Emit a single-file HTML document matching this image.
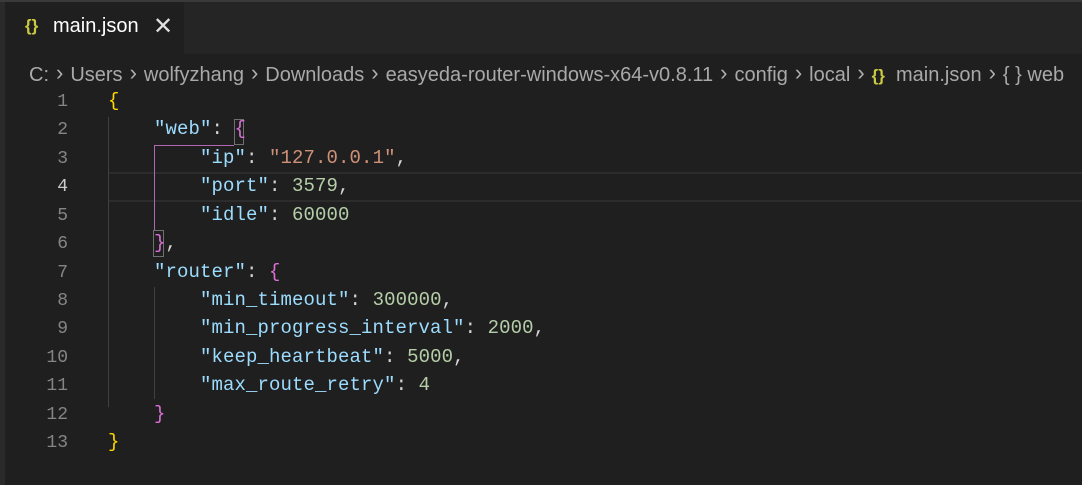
<!DOCTYPE html><html><head><style>
body{margin:0;width:1082px;height:485px;background:#1f1f1f;overflow:hidden;position:relative;font-family:"Liberation Sans",sans-serif}
.top{position:absolute;left:0;top:0;width:1082px;height:2px;background:#3a3a3a}
.tabbar{position:absolute;left:0;top:2px;width:1082px;height:52px;background:#252525}
.tab{position:absolute;left:5px;top:2px;width:179px;height:52px;background:#1f1f1f}
.ls{position:absolute;left:0;top:2px;width:5px;height:483px;background:#2a2a2a}
.t{position:absolute;white-space:pre}
.crumb{position:absolute;left:29px;top:61px;font-size:20px;color:#a9a9a9;white-space:pre}
.crumb i{display:inline-block;font-style:normal;font-size:22px;margin:0 7px;color:#b0b0b0;position:relative;top:-1px}
.code{position:absolute;font-family:"Liberation Mono",monospace;font-size:19px;white-space:pre;left:108px;letter-spacing:0.1px}
.ln{position:absolute;font-family:"Liberation Mono",monospace;font-size:18px;color:#858585;width:68px;text-align:right;left:0}
.k{color:#9cdcfe}.s{color:#ce9178}.n{color:#b5cea8}.p{color:#d4d4d4}.g{color:#ffd700}.m{color:#da70d6}
.guide{position:absolute;width:1px;background:#404040}
</style></head><body>
<div class="top"></div><div class="tabbar"></div><div class="tab"></div><div class="ls"></div>
<div class="t" style="left:25px;top:16px;font-size:17px;color:#cbcb41;font-weight:bold">{}</div>
<div class="t" style="left:53px;top:15px;font-size:20px;color:#ffffff">main.json</div>
<div class="t" style="left:153px;top:12px;font-size:24px;color:#e0e0e0">✕</div>
<div class="crumb">C:<i>›</i>Users<i>›</i>wolfyzhang<i>›</i>Downloads<i>›</i>easyeda-router-windows-x64-v0.8.11<i>›</i>config<i>›</i>local<i>›</i><span style="color:#cbcb41;font-weight:bold;font-size:17px">{}</span>  main.json<i>›</i>{ } web</div>
<div style="position:absolute;left:108px;top:172px;width:974px;height:26px;border-top:2px solid #2c2c2c;border-bottom:2px solid #2c2c2c"></div>
<div class="guide" style="left:108px;top:117px;height:290px"></div>
<div class="guide" style="left:154px;top:287px;height:112px"></div>
<div style="position:absolute;left:154px;top:145px;width:80px;height:1px;background:#b267b4"></div>
<div style="position:absolute;left:154px;top:145px;width:1px;height:85px;background:#b267b4"></div>
<div style="position:absolute;left:234px;top:119px;width:10px;height:26px;border:1px solid #707070;box-sizing:border-box"></div>
<div style="position:absolute;left:153px;top:230px;width:11px;height:27px;border:1px solid #707070;box-sizing:border-box"></div>
<div id="lines"></div>
<script>
var L=[
'<span class="g">{</span>',
'    <span class="k">"web"</span><span class="p">: </span><span class="m">{</span>',
'        <span class="k">"ip"</span><span class="p">: </span><span class="s">"127.0.0.1"</span><span class="p">,</span>',
'        <span class="k">"port"</span><span class="p">: </span><span class="n">3579</span><span class="p">,</span>',
'        <span class="k">"idle"</span><span class="p">: </span><span class="n">60000</span>',
'    <span class="m">}</span><span class="p">,</span>',
'    <span class="k">"router"</span><span class="p">: </span><span class="m">{</span>',
'        <span class="k">"min_timeout"</span><span class="p">: </span><span class="n">300000</span><span class="p">,</span>',
'        <span class="k">"min_progress_interval"</span><span class="p">: </span><span class="n">2000</span><span class="p">,</span>',
'        <span class="k">"keep_heartbeat"</span><span class="p">: </span><span class="n">5000</span><span class="p">,</span>',
'        <span class="k">"max_route_retry"</span><span class="p">: </span><span class="n">4</span>',
'    <span class="m">}</span>',
'<span class="g">}</span>'];
var h='';for(var i=0;i<13;i++){var y=91+i*28.42;
h+='<div class="ln" style="top:'+(y+1)+'px;'+(i==3?'color:#cccccc':'')+'">'+(i+1)+'</div><div class="code" style="top:'+(y-1)+'px">'+L[i]+'</div>';}
document.getElementById('lines').innerHTML=h;
</script>
</body></html>
